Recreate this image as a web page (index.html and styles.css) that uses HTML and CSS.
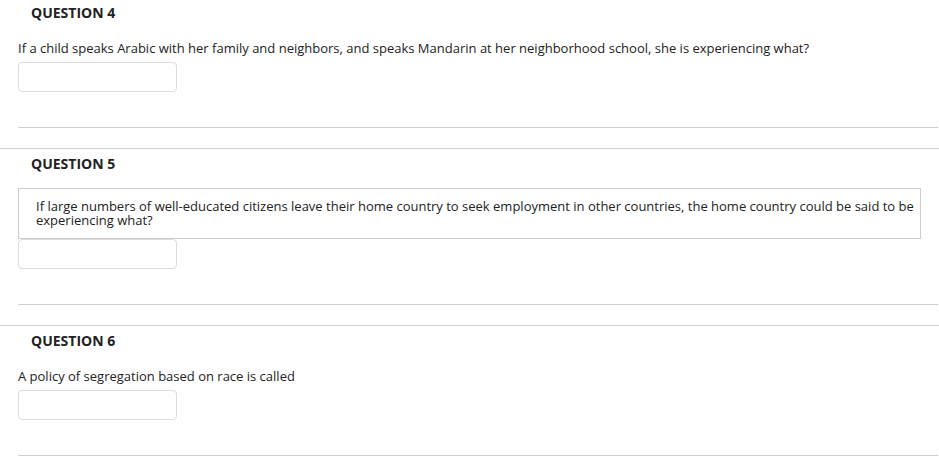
FILE: index.html
```html
<!DOCTYPE html>
<html lang="en">
<head>
<meta charset="utf-8">
<title>Questions</title>
<link rel="stylesheet" href="styles.css">
</head>
<body>
<div class="page">
  <section class="question">
    <h3 class="q-title">QUESTION 4</h3>
    <div class="q-body">
      <p class="q-text">If a child speaks Arabic with her family and neighbors, and speaks Mandarin at her neighborhood school, she is experiencing what?</p>
      <input class="answer" type="text">
    </div>
  </section>
  <section class="question">
    <h3 class="q-title">QUESTION 5</h3>
    <div class="q-body">
      <div class="q-box">If large numbers of well-educated citizens leave their home country to seek employment in other countries, the home country could be said to be experiencing what?</div>
      <input class="answer" type="text">
    </div>
  </section>
  <section class="question">
    <h3 class="q-title">QUESTION 6</h3>
    <div class="q-body">
      <p class="q-text">A policy of segregation based on race is called</p>
      <input class="answer" type="text">
    </div>
  </section>
</div>
</body>
</html>
```

FILE: styles.css
```css
html, body {
  margin: 0;
  padding: 0;
  background: #ffffff;
}

body {
  font-family: "Open Sans", "Noto Sans", sans-serif;
  color: #222222;
}

.page {
  display: flex;
  flex-direction: column;
}

.question {
  border-top: 1px solid #cfcfcf;
  padding: 0 1px 20px 18px;
}

.question:first-child {
  border-top: 0;
  padding-top: 0;
}

.q-title {
  margin: 5px 0 0 13px;
  font-size: 14px;
  line-height: 19px;
  font-weight: 700;
  color: #222222;
}

.question:first-child .q-title {
  margin-top: 3px;
}

.q-body {
  display: flex;
  flex-direction: column;
  align-items: flex-start;
  padding-bottom: 35px;
  border-bottom: 1px solid #cfcfcf;
}

.q-text {
  margin: 17px 0 5px 0;
  font-size: 13px;
  line-height: 18px;
}

.q-box {
  box-sizing: border-box;
  align-self: stretch;
  margin: 15px 17px 0 0;
  padding: 10px 3px 11px 17px;
  border: 1px solid #cccccc;
  font-size: 13px;
  line-height: 14px;
}

.answer {
  box-sizing: border-box;
  width: 159px;
  height: 30px;
  margin: 0;
  padding: 0 6px;
  border: 1px solid #dcdcdc;
  border-radius: 4px;
  background: #ffffff;
  font-family: inherit;
  font-size: 13px;
  outline: none;
}
```
